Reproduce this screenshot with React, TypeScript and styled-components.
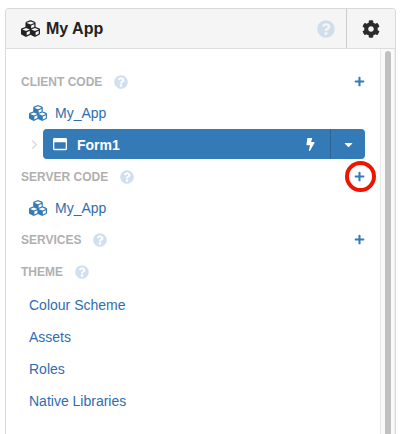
import React from 'react';
import styled, { createGlobalStyle } from 'styled-components';
import { FaBolt, FaCaretDown, FaCog, FaCubes, FaPlus, FaQuestionCircle, FaRegWindowMaximize } from 'react-icons/fa';
import { FiChevronRight } from 'react-icons/fi';

const GlobalStyle = createGlobalStyle`
  html, body {
    margin: 0;
    height: 434px;
    overflow: hidden;
    background: #fff;
    font-family: "Liberation Sans", Arial, sans-serif;
  }
`;

const Page = styled.div`
  position: relative;
  height: 434px;
  padding: 8px 5px 0 5px;
  box-sizing: border-box;
`;

const Panel = styled.div`
  height: 440px;
  border: 1px solid #d9d9d9;
  border-width: 1px 1px 0 1px;
  border-radius: 4px 4px 0 0;
  display: flex;
  flex-direction: column;
  overflow: hidden;
`;

const Header = styled.div`
  height: 39px;
  flex: none;
  display: flex;
  align-items: stretch;
  background: #f5f5f5;
  border-bottom: 1px solid #ddd;
`;

const Title = styled.div`
  flex: 1;
  display: flex;
  align-items: center;
  gap: 6px;
  padding: 1px 0 0 15px;
  font-size: 16px;
  font-weight: 700;
  color: #222;

  svg {
    margin-top: -1px;
    width: 19px;
    height: 19px;
  }
`;

const HeaderHelp = styled.div`
  display: flex;
  align-items: center;
  padding-right: 11px;
  color: #d0deec;
  font-size: 18px;
`;

const GearCell = styled.div`
  width: 48px;
  display: flex;
  align-items: center;
  justify-content: center;
  border-left: 1px solid #ccc;
  color: #2b2b2b;
  font-size: 18px;
`;

const Body = styled.div`
  flex: 1;
  display: flex;
`;

const Content = styled.div`
  flex: 1;
  padding: 16px 15px 0 15px;
`;

const SectionRow = styled.div`
  height: 32px;
  padding-top: 2px;
  box-sizing: border-box;
  display: flex;
  align-items: center;
`;

const SectionLabel = styled.span`
  font-size: 12px;
  font-weight: 700;
  color: #b0b0b0;
`;

const SectionHelp = styled.span`
  display: flex;
  margin-left: 12px;
  color: #d0e0f0;
  font-size: 14px;
`;

const AddButton = styled.span`
  display: flex;
  margin-left: auto;
  margin-bottom: 2px;
  color: #337ab7;
  font-size: 11px;
`;

const LinkRow = styled.div`
  height: 32px;
  display: flex;
  align-items: center;
  gap: 8px;
  padding-left: 8px;
  font-size: 14px;
  color: #2f6db0;
`;

const ServerLinks = styled.div`
  margin-bottom: -1px;
`;

const ThemeLinks = styled.div`
  margin-top: 2px;
`;

const AppIcon = styled.span`
  display: flex;
  font-size: 18px;
  color: #337ab7;
`;

const FormRow = styled.div`
  height: 30px;
  margin-bottom: 1px;
  display: flex;
  align-items: center;
`;

const Chevron = styled.span`
  width: 22px;
  display: flex;
  padding-left: 6px;
  box-sizing: border-box;
  color: #d8d8d8;
  font-size: 15px;
`;

const FormButton = styled.div`
  flex: 1;
  height: 30px;
  display: flex;
  align-items: stretch;
  background: #337ab7;
  border-radius: 4px;
  color: #fff;
`;

const FormName = styled.div`
  flex: 1;
  display: flex;
  align-items: center;
  gap: 10px;
  padding: 1px 0 0 10px;
  font-size: 14px;
  font-weight: 700;

  svg {
    margin-top: -1px;
  }
`;

const BoltCell = styled.div`
  width: 40px;
  padding-left: 1px;
  box-sizing: border-box;
  display: flex;
  align-items: center;
  justify-content: center;
  font-size: 13px;
`;

const CaretCell = styled.div`
  width: 34px;
  display: flex;
  align-items: center;
  justify-content: center;
  border-left: 1px solid #2a6496;
  font-size: 13px;
`;

const ScrollTrack = styled.div`
  width: 15px;
  flex: none;
  padding: 2px 3px 0 4px;
  box-sizing: border-box;
  background: #fafafa;
  border-left: 1px solid #e8e8e8;
  border-right: 1px solid #eee;
`;

const ScrollThumb = styled.div`
  height: 100%;
  background: #c1c1c1;
  border-radius: 4px 4px 0 0;
`;

const Callout = styled.div`
  position: absolute;
  left: 345px;
  top: 161px;
  width: 31px;
  height: 31px;
  box-sizing: border-box;
  border: 4px solid #f01400;
  border-radius: 50%;
`;

const Section: React.FC<{ label: string; add?: boolean }> = ({ label, add }) => (
  <SectionRow>
    <SectionLabel>{label}</SectionLabel>
    <SectionHelp><FaQuestionCircle /></SectionHelp>
    {add && <AddButton><FaPlus /></AddButton>}
  </SectionRow>
);

const AppLink: React.FC = () => (
  <LinkRow>
    <AppIcon><FaCubes /></AppIcon>
    My_App
  </LinkRow>
);

const App: React.FC = () => (
  <>
    <GlobalStyle />
    <Page>
      <Panel>
        <Header>
          <Title><FaCubes />My App</Title>
          <HeaderHelp><FaQuestionCircle /></HeaderHelp>
          <GearCell><FaCog /></GearCell>
        </Header>
        <Body>
          <Content>
            <Section label="CLIENT CODE" add />
            <AppLink />
            <FormRow>
              <Chevron><FiChevronRight /></Chevron>
              <FormButton>
                <FormName><FaRegWindowMaximize />Form1</FormName>
                <BoltCell><FaBolt /></BoltCell>
                <CaretCell><FaCaretDown /></CaretCell>
              </FormButton>
            </FormRow>
            <Section label="SERVER CODE" add />
            <ServerLinks><AppLink /></ServerLinks>
            <Section label="SERVICES" add />
            <Section label="THEME" />
            <ThemeLinks>
              <LinkRow>Colour Scheme</LinkRow>
              <LinkRow>Assets</LinkRow>
              <LinkRow>Roles</LinkRow>
              <LinkRow>Native Libraries</LinkRow>
            </ThemeLinks>
          </Content>
          <ScrollTrack><ScrollThumb /></ScrollTrack>
        </Body>
      </Panel>
      <Callout />
    </Page>
  </>
);

export default App;
